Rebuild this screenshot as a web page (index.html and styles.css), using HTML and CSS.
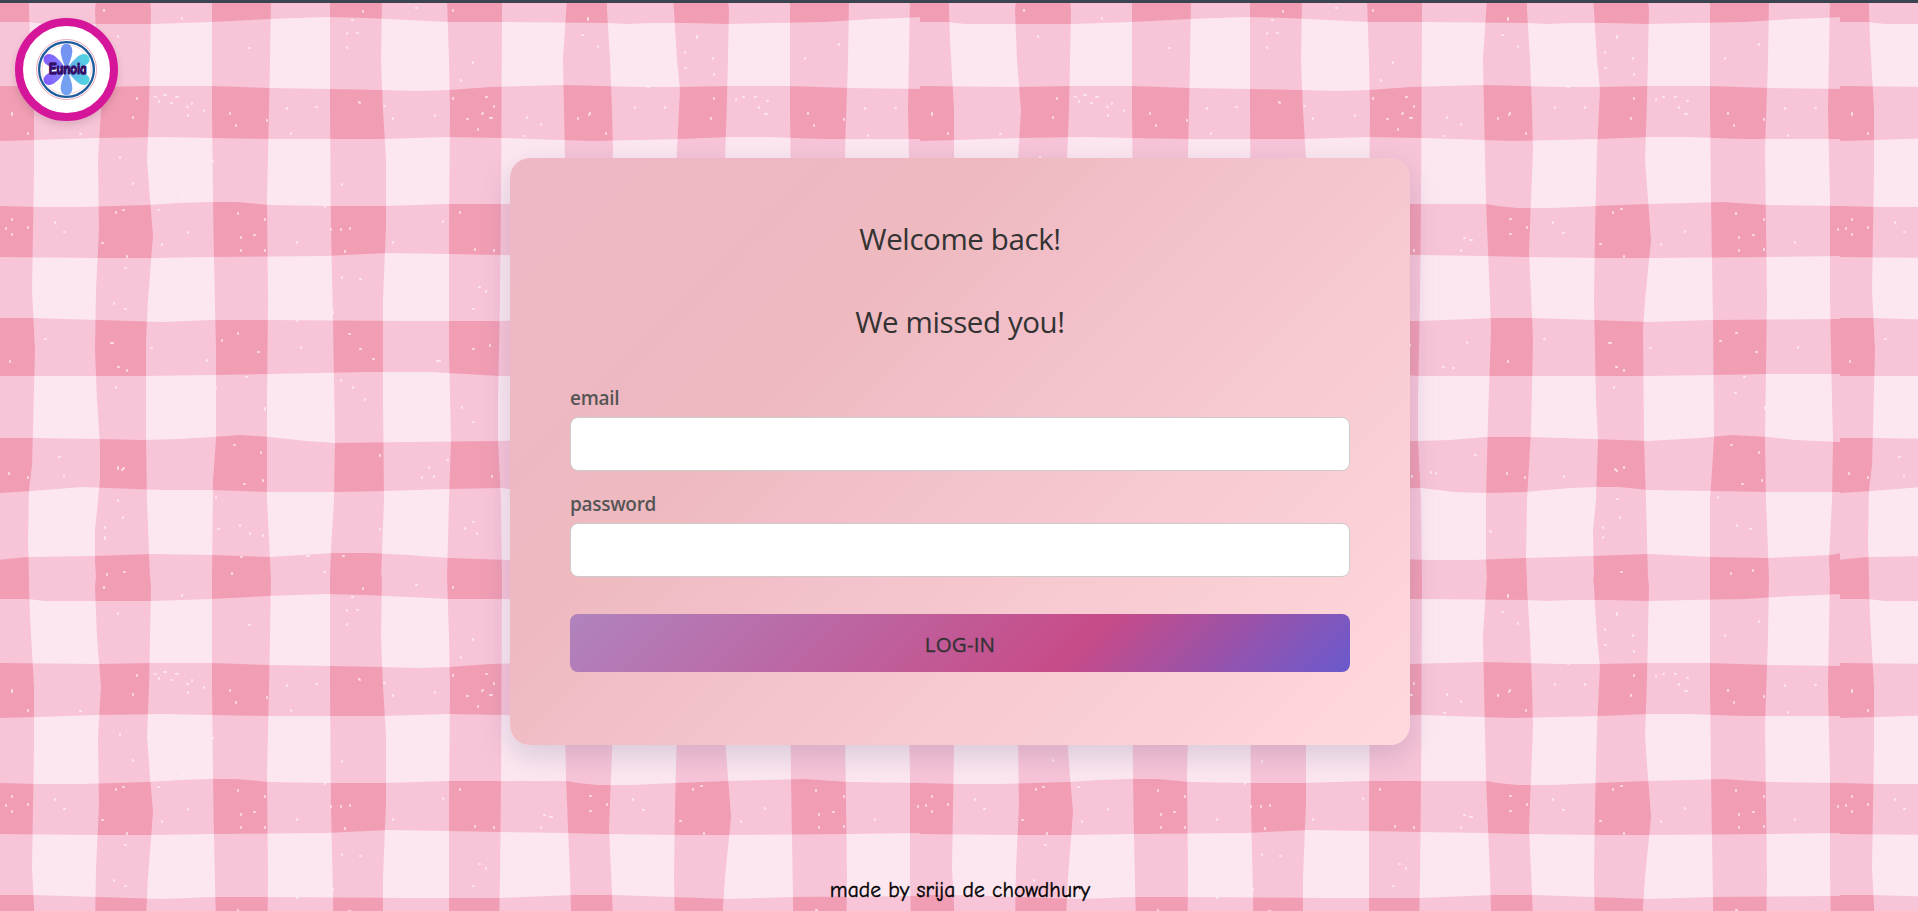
FILE: index.html
```html
<!DOCTYPE html>
<html lang="en">
<head>
<meta charset="utf-8">
<title>Eunoia</title>
<link rel="stylesheet" href="styles.css">
</head>
<body>
<svg class="gingham" aria-hidden="true">
  <defs>
    <path id="cols" d="M-2 -2L29 -2L29 10L30 40L34 110L34 170L33 230L32 290L35 350L33 430L32 465L29 490L28 540L29 579L-2 579Z
      M96 -2L95 10L97 60L101 110L98 160L99 230L96 290L95 350L97 400L100 445L100 480L95 530L95 560L96 579L150 579L147 500L146 440L146 340L148 300L153 235L150 200L147 160L149 110L150 60L151 10L150 -2Z
      M212 -2L212 110L213 200L214 260L216 350L216 440L213 480L212 579L271 579L270 560L267 500L267 400L268 300L267 200L269 110L270 60L271 -2Z
      M330 -2L330 110L331 230L333 320L335 440L334 500L331 550L330 579L381 579L384 500L383 400L383 300L386 225L386 160L383 110L381 60L382 -2Z
      M447 -2L449 60L450 110L449 230L449 350L451 440L449 500L447 579L502 579L501 500L498 440L498 400L500 300L501 200L502 10L502 -2Z
      M567 -2L563 60L564 110L566 200L570 300L571 330L568 420L566 500L566 560L567 579L607 579L606 560L607 500L611 430L613 340L609 250L613 150L612 110L610 60L607 10L607 -2Z
      M673 -2L674 10L677 60L680 90L677 150L675 230L674 300L676 400L678 440L676 500L673 530L674 579L728 579L726 500L724 440L723 330L725 300L731 240L725 160L727 100L729 10L728 -2Z
      M790 -2L790 110L791 200L793 320L794 440L790 500L790 579L849 579L846 500L845 440L847 300L845 150L848 60L849 -2Z
      M910 -2L908 110L910 200L910 300L912 400L913 440L912 500L909 560L910 579L922 579L922 -2Z"/>
    <path id="rows" d="M-2 -2L922 -2L922 17L900 18L872 19L824 22L769 23L728 24L690 23L673 23L650 23L628 24L607 23L502 22L449 22L408 20L367 18L326 17L269 19L212 22L151 24L98 24L45 24L28 22L-2 22Z
      M-2 86L98 87L151 86L212 86L269 88L331 89L380 90L420 91L449 90L490 87L563 85L640 87L680 87L728 86L789 86L848 88L922 89L922 139L824 139L768 137L728 137L680 139L592 141L563 140L502 138L449 137L380 139L269 139L212 138L163 137L98 138L35 140L-2 141Z
      M-2 206L37 207L82 207L147 205L180 203L212 202L237 202L269 205L331 206L384 206L449 204L500 204L566 204L578 206L597 208L632 208L676 206L728 204L769 203L803 202L848 205L922 206L922 256L848 257L728 258L680 258L604 257L566 256L500 255L449 254L388 253L326 256L212 257L152 258L98 258L-2 257Z
      M-2 318L33 318L98 320L163 322L212 320L265 320L408 321L500 321L575 318L612 318L673 320L728 322L792 320L922 319L922 374L848 374L792 375L728 376L500 376L465 374L429 372L367 372L269 374L212 375L143 376L-2 376Z
      M-2 438L33 438L98 439L143 440L180 439L212 437L241 435L269 437L306 441L335 443L408 442L500 441L530 440L566 437L610 437L673 439L728 441L780 438L812 435L848 437L875 440L922 442L922 492L850 492L791 491L728 490L700 487L676 487L650 488L604 492L566 493L535 492L501 488L449 489L384 491L335 492L269 492L212 490L163 490L135 489L82 487L31 491L-2 493Z
      M-2 560L28 557L94 556L151 554L212 555L269 557L335 553L371 553L408 555L449 558L509 560L553 560L604 558L673 556L728 554L789 557L848 558L910 555L922 553L922 579L-2 579Z"/>
    <clipPath id="over"><use href="#cols"/></clipPath>
    <pattern id="cloth" width="920" height="577" patternUnits="userSpaceOnUse">
      <rect class="cloth-base" width="920" height="577"/>
      <use class="cloth-band" href="#cols"/>
      <use class="cloth-band" href="#rows"/>
      <g clip-path="url(#over)"><use class="cloth-cross" href="#rows"/></g>
      <path class="flecks" d="M104 10v1M182 18v1M363 11v1M352 20h1M416 8h1M453 10v1M588 18v2M347 47v1M249 48h1M118 36v1M357 33h1M347 33v1M192 57v1M473 62v1M461 80v1M582 35h1M598 46v1M137 98v1M155 97h1M164 95h2M176 97h2M159 101v1M171 103h1M192 103v1M187 107h1M204 110v1M188 115v1M133 117v1M12 113v2M230 113v1M236 125v1M267 120v1M316 107h1M287 108v1M291 133v1M359 102l1 1M384 106h1M393 118v1M435 115v1M453 98v1M486 97h1M494 106v1M483 113l-1 1M490 118h2M467 119h1M478 129v1M527 117v1M541 124v1M524 136h1M590 113l-1 2M578 118v1M606 133v1M28 133v1M80 134h1M12 219v1M6 228v1M12 234v1M28 227v1M55 222v1M64 232h1M123 210h1M116 212v1M158 210h1M238 213v1M265 219v1M241 237v1M254 235h1M241 250v1M265 250v1M188 232v1M162 244v1M102 243h1M127 256v1M331 229v1M341 229v1M350 228v1M345 251v1M297 242v1M460 212v1M475 249v1M494 250v1M443 221v1M393 242v1M342 184v1M325 206v1M133 183v1M212 161h1M182 197h1M120 157v1M125 268h1M342 277v1M360 279h1M114 303v1M125 309h1M479 287h1M486 291v1M473 309h1M297 320v1M333 312v1"/>
      <path class="flecks" d="M238 333v1M222 340v1M258 352h1M301 347v1M349 334h1M360 349h1M373 359h1M45 339h1M111 343h2M118 367h1M127 370v1M151 348h1M10 361v1M437 361h3M490 345v1M473 349h1M207 360v1M116 387v1M246 377h1M216 388v1M265 408v2M353 387v1M365 399v1M341 380v1M462 407v1M473 422h1M234 445h1M261 452v1M9 473v1M28 477v1M59 457h1M64 476v1M122 470l2-2M118 467v2M244 484h1M263 480v1M380 455v1M429 467v1M434 476v1M422 477v1M447 460h1M492 476v1M118 500v1M123 517v1M105 527v1M105 537v2M216 497v1M218 529h1M240 525v1M250 533v1M263 535v1M380 529v1M465 528v1M473 522h1M477 533v1M124 572h1M107 574v1M232 573v1M324 572h1M307 556h2M241 557h1M343 556h1M697 36v2M685 52v1M685 68h1M713 58v1M714 74v1M805 58v1M839 44v1M714 98v1M711 118v1M743 97h1M736 99v1M755 97h1M767 101h1M759 107v1M765 114h2M808 113v1M814 125v1M844 119v1M895 108h1M865 108v1M868 135v1M648 87h1M635 107v1M665 107v1M701 209h1M693 212v1M816 213v1M844 219v1M819 237v1M833 235h1M819 250v1M844 249v1M765 231v1M741 244v1M704 256v1M680 244h1M633 222v1M643 233h1M590 219h1M590 234h1M607 227v1M550 240h2M544 238h1M541 250v1M918 229v1M875 242v1"/>
      <path class="flecks" d="M689 343h2M696 367h1M704 370v1M730 348h1M816 333h1M800 341h1M836 352h1M878 347v1M624 339h1M588 361v1M547 342v1M523 367h1M533 368h1M845 407v2M815 393h1M824 377h1M694 387v1M811 445h1M839 452v1M555 455h1M511 472v1M516 473v1M587 473v1M605 477v1M697 471l-2-2M704 467v1M822 484h1M842 480v1M644 476v1M697 499h1M700 517v1M683 527v1M683 537v1M817 525v1M830 529h1M570 531l1 1M798 497v1M701 572h1M811 573v1M833 570v1"/>
    </pattern>
  </defs>
  <rect width="100%" height="100%" fill="url(#cloth)"/>
</svg>

<header class="topbar"></header>

<a class="logo" href="#" aria-label="Eunoia">
  <svg width="87" height="87" viewBox="-43.5 -43.5 87 87">
    <defs>
      <path id="petal" d="M0 0C-3-6-6-14-5.8-19C-5.4-28 5.4-28 5.8-19C6-14 3-6 0 0Z"/>
      <linearGradient id="violet" x1="0" y1="0" x2="0" y2="1"><stop offset="0" stop-color="#8459ff"/><stop offset="1" stop-color="#7d8cf6"/></linearGradient>
      <linearGradient id="aqua" x1="0" y1="0" x2="0" y2="1"><stop offset="0" stop-color="#4fd8e0"/><stop offset="1" stop-color="#69a6ee"/></linearGradient>
    </defs>
    <circle r="30" fill="none" stroke="#e9a5b7" stroke-width="1"/>
    <circle r="24.6" fill="none" stroke="#f3c3cf" stroke-width=".7"/>
    <circle r="27.4" fill="none" stroke="#1c5c9c" stroke-width="2.3"/>
    <use href="#petal" fill="#7494f4"/>
    <use href="#petal" fill="#74a0f2" transform="rotate(180)"/>
    <use href="#petal" fill="url(#violet)" transform="rotate(-60)"/>
    <use href="#petal" fill="url(#violet)" transform="rotate(-120)"/>
    <use href="#petal" fill="url(#aqua)" transform="rotate(60)"/>
    <use href="#petal" fill="url(#aqua)" transform="rotate(120)"/>
    <text class="logo-word" x="1.2" y="4.8" textLength="38" lengthAdjust="spacingAndGlyphs">Eunoia</text>
  </svg>
</a>

<main class="page">
  <form class="card">
    <h1 class="greeting">Welcome back!</h1>
    <h1 class="greeting greeting-second">We missed you!</h1>
    <label class="label" for="email">email</label>
    <input class="field" id="email" type="email">
    <label class="label label-password" for="password">password</label>
    <input class="field" id="password" type="password">
    <button class="submit" type="button">LOG-IN</button>
  </form>
</main>

<footer class="footer">made by srija de chowdhury</footer>
</body>
</html>
```
FILE: styles.css
```css
* {
  box-sizing: border-box;
}

body {
  margin: 0;
  height: 100vh;
  overflow: hidden;
  display: flex;
  flex-direction: column;
  font-family: "Segoe UI", "Open Sans", "Noto Sans", sans-serif;
}

.gingham {
  position: absolute;
  inset: 0;
  z-index: -1;
  width: 100%;
  height: 100%;
}

.cloth-base { fill: #fce7f1; }
.cloth-band { fill: #f8c4d8; }
.cloth-cross { fill: #f19eb4; }

.flecks {
  fill: none;
  stroke: #fff0f5;
  stroke-width: 2;
  stroke-linecap: round;
  opacity: .75;
}

.topbar {
  flex: none;
  height: 3px;
  background: #3c4351;
}

.logo {
  position: absolute;
  top: 18px;
  left: 15px;
  width: 103px;
  height: 103px;
  border: 8px solid #d6169a;
  border-radius: 50%;
  background: #fff;
  box-shadow: 0 4px 8px rgba(0, 0, 0, .12);
}

.logo svg {
  display: block;
}

.logo-word {
  font-family: "Comic Neue", "Open Sans", sans-serif;
  font-size: 15.5px;
  font-weight: 700;
  text-anchor: middle;
  fill: #34106b;
  stroke: #34106b;
  stroke-width: 1.5;
}

.page {
  flex: 1;
  display: flex;
  justify-content: center;
  align-items: flex-start;
  padding: 155px 0 0 2px;
}

.card {
  width: 900px;
  height: 587px;
  padding: 60px;
  display: flex;
  flex-direction: column;
  border-radius: 20px;
  background: linear-gradient(135deg, #eeb8c4 0%, #eeb8c3 22%, #eebabf 33%, #f2bfc9 45%, #ffd9dd 100%);
  box-shadow: 0 10px 30px rgba(90, 90, 130, .22);
}

.greeting {
  margin: 0;
  font-size: 29.5px;
  line-height: 42px;
  font-weight: 400;
  letter-spacing: -.4px;
  text-align: center;
  color: #333;
}

.greeting-second {
  margin-top: 41px;
}

.label {
  margin: 42px 0 5px;
  font-size: 19px;
  line-height: 27px;
  font-weight: 600;
  letter-spacing: -.3px;
  color: #555;
}

.label-password {
  margin-top: 20px;
}

.field {
  flex: none;
  width: 100%;
  height: 54px;
  padding: 0 16px;
  border: 1px solid #ccc;
  border-radius: 8px;
  background: #fff;
  font: inherit;
}

.submit {
  flex: none;
  height: 58px;
  margin-top: 37px;
  padding: 2px 0 0;
  border: 0;
  border-radius: 8px;
  background: linear-gradient(135deg, #b083be 0%, #c74b88 65%, #6a5acd 100%);
  font: 500 20.5px/56px "Segoe UI", "Open Sans", sans-serif;
  -webkit-text-stroke: .3px #333;
  letter-spacing: .2px;
  color: #333;
}

.footer {
  flex: none;
  padding-left: 2px;
  height: 36px;
  font-family: "Comic Sans MS", "Comic Neue", Lato, sans-serif;
  font-size: 21.5px;
  line-height: 30px;
  letter-spacing: .05px;
  -webkit-text-stroke: .4px #000;
  text-align: center;
  color: #000;
}
```
